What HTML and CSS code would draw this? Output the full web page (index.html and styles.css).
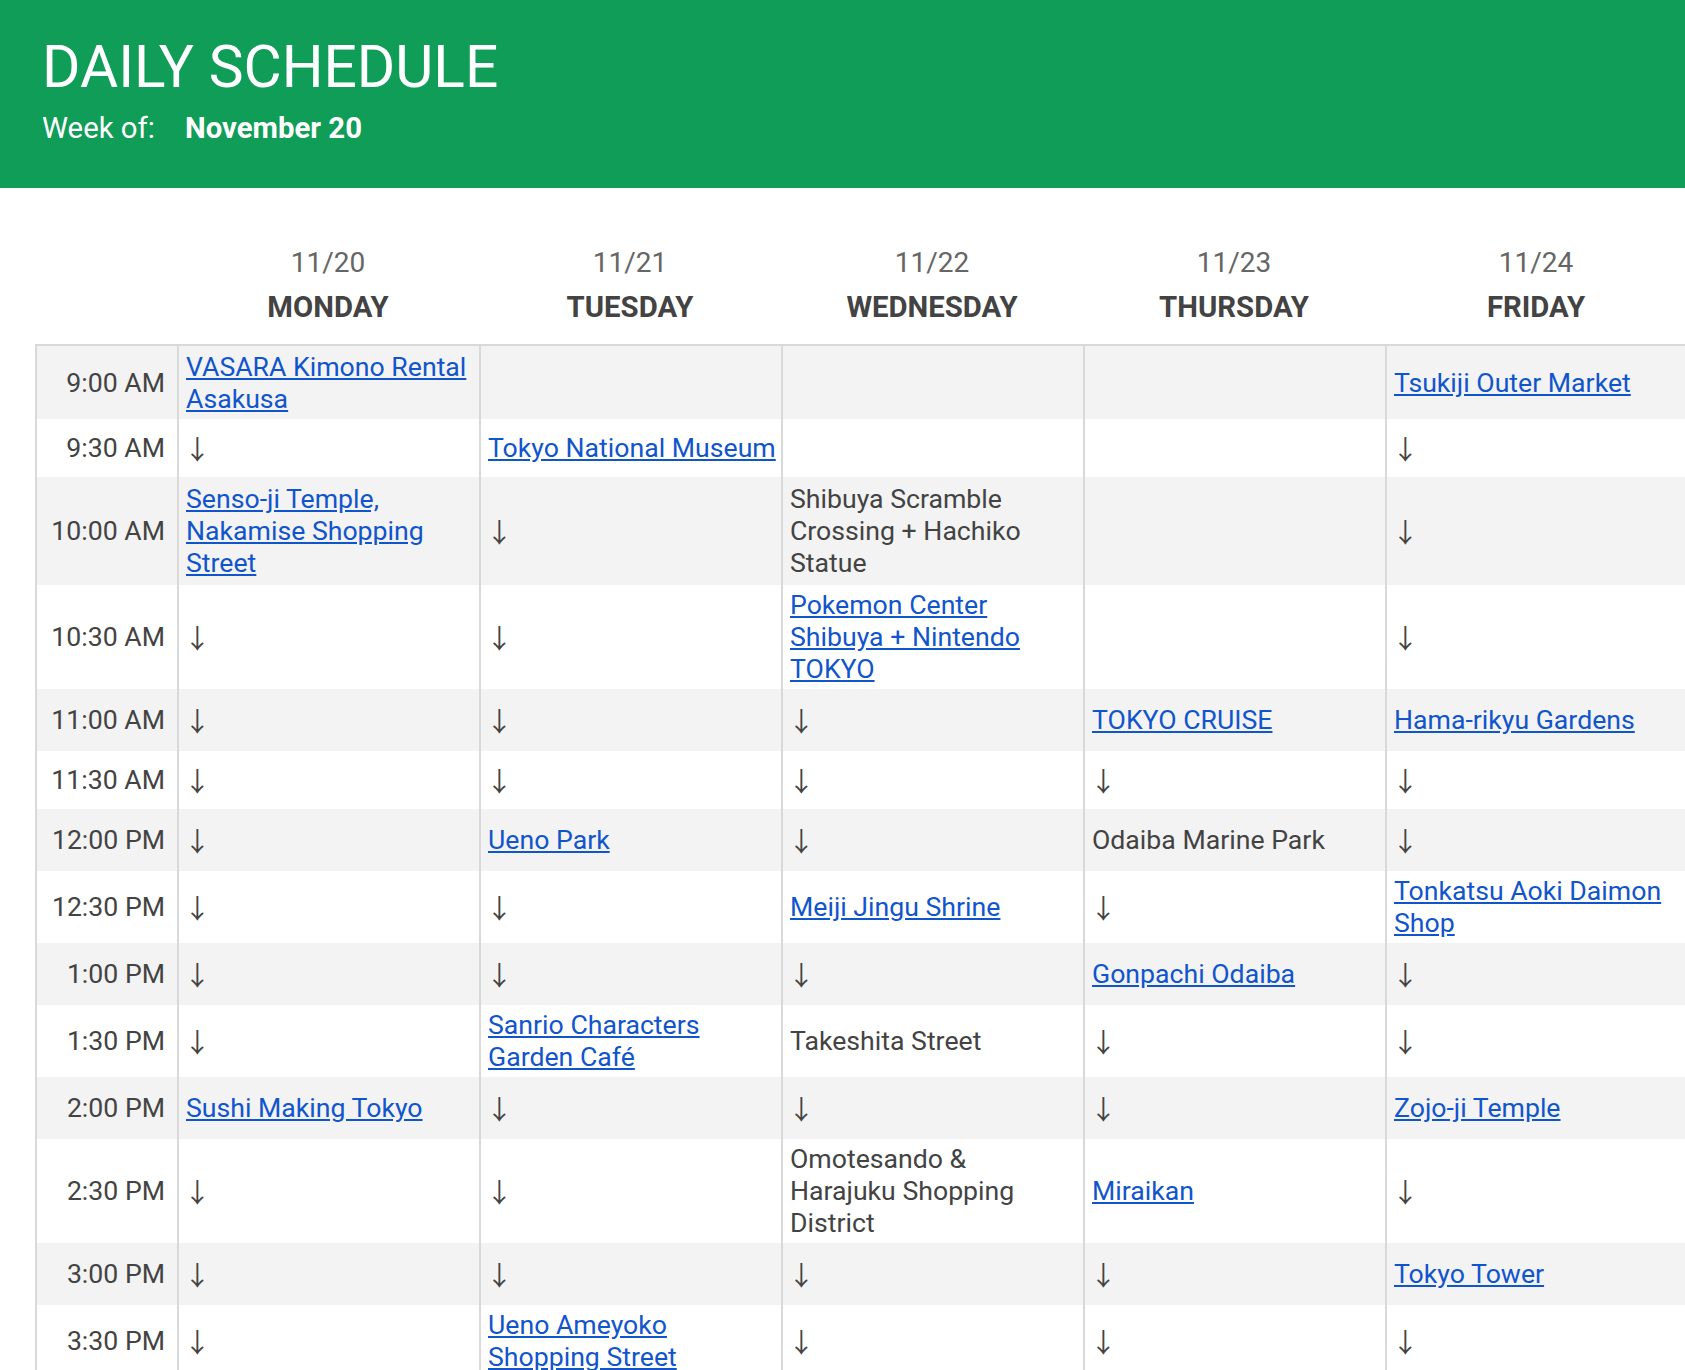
FILE: index.html
```html
<!DOCTYPE html>
<html lang="en">
<head>
<meta charset="utf-8">
<title>Daily Schedule</title>
<link rel="stylesheet" href="styles.css">
</head>
<body>
<header class="banner">
  <h1 class="title">DAILY SCHEDULE</h1>
  <div class="week"><span class="week-label">Week of:</span><span class="week-date">November 20</span></div>
</header>
<main class="sheet">
  <div class="days">
    <div class="corner"></div>
    <div class="day"><div class="date">11/20</div><div class="dayname">MONDAY</div></div>
    <div class="day"><div class="date">11/21</div><div class="dayname">TUESDAY</div></div>
    <div class="day"><div class="date">11/22</div><div class="dayname">WEDNESDAY</div></div>
    <div class="day"><div class="date">11/23</div><div class="dayname">THURSDAY</div></div>
    <div class="day"><div class="date">11/24</div><div class="dayname">FRIDAY</div></div>
  </div>
  <table class="schedule">
    <colgroup>
      <col class="c-time"><col class="c-day"><col class="c-day"><col class="c-day"><col class="c-day"><col class="c-day">
    </colgroup>
    <tbody>
      <tr><td class="time">9:00 AM</td><td><a href="#">VASARA Kimono Rental Asakusa</a></td><td></td><td></td><td></td><td><a href="#">Tsukiji Outer Market</a></td></tr>
      <tr><td class="time">9:30 AM</td><td class="arrow">↓</td><td><a href="#">Tokyo National Museum</a></td><td></td><td></td><td class="arrow">↓</td></tr>
      <tr><td class="time">10:00 AM</td><td><a href="#">Senso-ji Temple, Nakamise Shopping Street</a></td><td class="arrow">↓</td><td>Shibuya Scramble Crossing + Hachiko Statue</td><td></td><td class="arrow">↓</td></tr>
      <tr><td class="time">10:30 AM</td><td class="arrow">↓</td><td class="arrow">↓</td><td><a href="#">Pokemon Center Shibuya + Nintendo TOKYO</a></td><td></td><td class="arrow">↓</td></tr>
      <tr><td class="time">11:00 AM</td><td class="arrow">↓</td><td class="arrow">↓</td><td class="arrow">↓</td><td><a href="#">TOKYO CRUISE</a></td><td><a href="#">Hama-rikyu Gardens</a></td></tr>
      <tr><td class="time">11:30 AM</td><td class="arrow">↓</td><td class="arrow">↓</td><td class="arrow">↓</td><td class="arrow">↓</td><td class="arrow">↓</td></tr>
      <tr><td class="time">12:00 PM</td><td class="arrow">↓</td><td><a href="#">Ueno Park</a></td><td class="arrow">↓</td><td>Odaiba Marine Park</td><td class="arrow">↓</td></tr>
      <tr><td class="time">12:30 PM</td><td class="arrow">↓</td><td class="arrow">↓</td><td><a href="#">Meiji Jingu Shrine</a></td><td class="arrow">↓</td><td><a href="#">Tonkatsu Aoki Daimon Shop</a></td></tr>
      <tr><td class="time">1:00 PM</td><td class="arrow">↓</td><td class="arrow">↓</td><td class="arrow">↓</td><td><a href="#">Gonpachi Odaiba</a></td><td class="arrow">↓</td></tr>
      <tr><td class="time">1:30 PM</td><td class="arrow">↓</td><td><a href="#">Sanrio Characters Garden Café</a></td><td>Takeshita Street</td><td class="arrow">↓</td><td class="arrow">↓</td></tr>
      <tr><td class="time">2:00 PM</td><td><a href="#">Sushi Making Tokyo</a></td><td class="arrow">↓</td><td class="arrow">↓</td><td class="arrow">↓</td><td><a href="#">Zojo-ji Temple</a></td></tr>
      <tr><td class="time">2:30 PM</td><td class="arrow">↓</td><td class="arrow">↓</td><td>Omotesando &amp;<br>Harajuku Shopping District</td><td><a href="#">Miraikan</a></td><td class="arrow">↓</td></tr>
      <tr><td class="time">3:00 PM</td><td class="arrow">↓</td><td class="arrow">↓</td><td class="arrow">↓</td><td class="arrow">↓</td><td><a href="#">Tokyo Tower</a></td></tr>
      <tr><td class="time">3:30 PM</td><td class="arrow">↓</td><td><a href="#">Ueno Ameyoko Shopping Street</a></td><td class="arrow">↓</td><td class="arrow">↓</td><td class="arrow">↓</td></tr>
    </tbody>
  </table>
</main>
</body>
</html>
```
FILE: styles.css
```css
* { box-sizing: border-box; }
html, body { margin: 0; padding: 0; overflow: hidden; }
body {
  width: 1685px;
  background: #ffffff;
  color: #434343;
  font-family: Roboto, "Liberation Sans", Arial, sans-serif;
}

.banner {
  height: 188px;
  background: #0f9d58;
  color: #ffffff;
  padding: 33px 0 0 42px;
}
.title {
  margin: 0;
  font-size: 58.67px;
  font-weight: 400;
  line-height: 68px;
}
.week {
  display: flex;
  margin-top: 11px;
  font-size: 29.33px;
  line-height: 32px;
}
.week-label { width: 143px; }
.week-date { font-weight: 700; }

.sheet { padding-left: 35px; }

.days {
  display: flex;
  margin-top: 59px;
  margin-bottom: 21px;
}
.corner { flex: none; width: 142px; }
.day { flex: none; width: 302px; text-align: center; }
.date {
  font-size: 28px;
  line-height: 32px;
  color: #666666;
}
.dayname {
  margin-top: 12px;
  font-size: 29.33px;
  line-height: 32px;
  font-weight: 700;
  color: #434343;
}

.schedule {
  border-collapse: separate;
  border-spacing: 0;
  table-layout: fixed;
  width: 1654px;
  border-top: 2px solid #d9d9d9;
  border-left: 2px solid #d9d9d9;
}
.c-time { width: 142px; }
.c-day { width: 302px; }

.schedule td {
  border-right: 2px solid #d9d9d9;
  padding: 0 3px 0 7px;
  font-size: 26.67px;
  line-height: 32px;
  vertical-align: middle;
  color: #434343;
}
.schedule td.time {
  text-align: right;
  padding: 0 12px 0 4px;
}
.schedule tr:nth-child(odd) td { background: #f3f3f3; }

.schedule tr:nth-child(1) { height: 73px; }
.schedule tr:nth-child(2) { height: 58px; }
.schedule tr:nth-child(3) { height: 108px; }
.schedule tr:nth-child(4) { height: 104px; }
.schedule tr:nth-child(5) { height: 62px; }
.schedule tr:nth-child(6) { height: 58px; }
.schedule tr:nth-child(7) { height: 62px; }
.schedule tr:nth-child(8) { height: 72px; }
.schedule tr:nth-child(9) { height: 62px; }
.schedule tr:nth-child(10) { height: 72px; }
.schedule tr:nth-child(11) { height: 62px; }
.schedule tr:nth-child(12) { height: 104px; }
.schedule tr:nth-child(13) { height: 62px; }
.schedule tr:nth-child(14) { height: 72px; }

.schedule a {
  color: #1155cc;
  text-decoration: underline;
}
.schedule td.arrow {
  font-family: "Noto Sans CJK JP", "Noto Sans CJK SC", sans-serif;
  color: #434343;
  padding-left: 5px;
}
```
